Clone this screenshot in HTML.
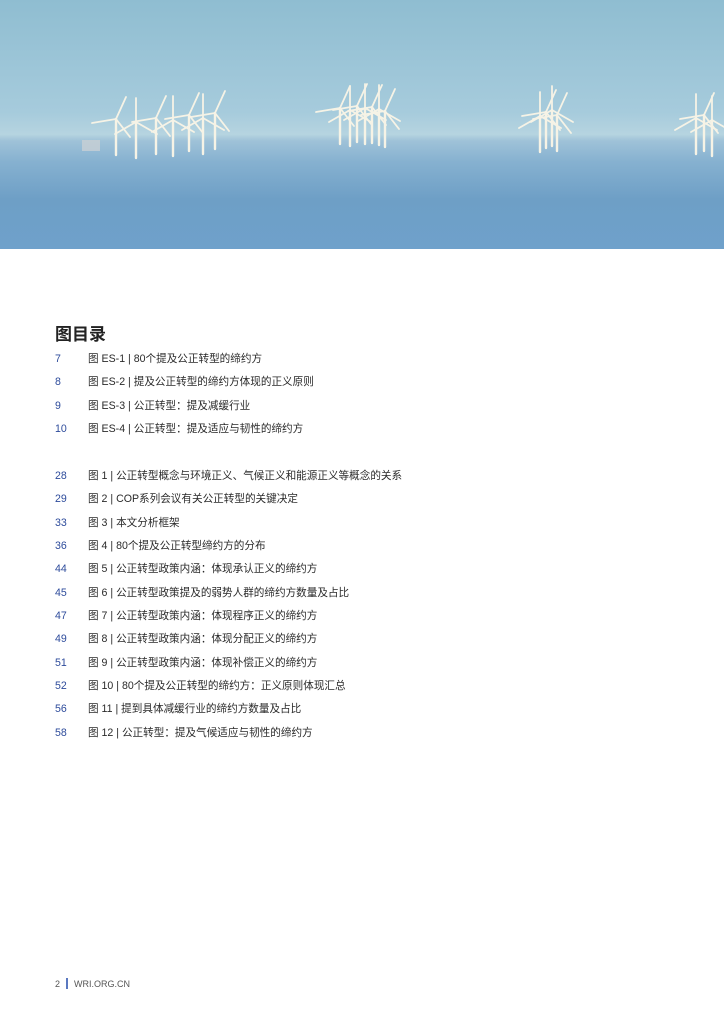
<!DOCTYPE html>
<html><head><meta charset="utf-8"><style>
body{margin:0;width:724px;height:1024px;background:#fff;position:relative;overflow:hidden;font-family:"Liberation Sans","Noto Sans CJK SC",sans-serif;}
.ph{position:absolute;left:0;top:0;width:724px;height:249px;}
h1{position:absolute;left:55px;top:320px;margin:0;font-size:17px;font-weight:bold;color:#222;font-family:"Noto Sans CJK SC",sans-serif;}
.r{position:absolute;left:0;font-size:10.6px;color:#2a2a2a;white-space:nowrap;line-height:14px}
.r b{position:absolute;left:55px;font-weight:normal;color:#2d4b9b;}
.r span{position:absolute;left:88px;}
.ft{position:absolute;left:55px;top:978px;font-size:9px;color:#555;}
.ft i{display:inline-block;width:2px;height:11px;background:#5a78c0;vertical-align:-2px;margin:0 6px;}
</style></head><body>
<svg class="ph" width="724" height="249" viewBox="0 0 724 249">
<defs>
<linearGradient id="g" x1="0" y1="0" x2="0" y2="1">
<stop offset="0" stop-color="#8fbdd1"/>
<stop offset="0.45" stop-color="#a6cbdc"/>
<stop offset="0.54" stop-color="#b6d4e0"/>
<stop offset="0.565" stop-color="#9fc2d8"/>
<stop offset="0.65" stop-color="#86b1d0"/>
<stop offset="0.8" stop-color="#6e9fc6"/>
<stop offset="1" stop-color="#6fa1cb"/>
</linearGradient>
<g id="t" stroke="#f6f3e6" stroke-linecap="round">
<line x1="0" y1="0" x2="0" y2="36" stroke-width="2.4"/>
<line x1="0" y1="0" x2="0" y2="-24" stroke-width="1.8"/>
<line x1="0" y1="0" x2="21" y2="12" stroke-width="1.8"/>
<line x1="0" y1="0" x2="-21" y2="12" stroke-width="1.8"/>
</g>
<g id="u" stroke="#f6f3e6" stroke-linecap="round">
<line x1="0" y1="0" x2="0" y2="36" stroke-width="2.4"/>
<line x1="0" y1="0" x2="10" y2="-22" stroke-width="1.8"/>
<line x1="0" y1="0" x2="14" y2="18" stroke-width="1.8"/>
<line x1="0" y1="0" x2="-24" y2="4" stroke-width="1.8"/>
</g>
</defs>
<rect width="724" height="249" fill="url(#g)"/>
<rect x="82" y="140" width="18" height="11" fill="#c8d0d4" opacity=".8"/>
<use href="#u" x="116" y="119"/>
<use href="#t" x="136" y="122"/>
<use href="#u" x="156" y="118"/>
<use href="#t" x="173" y="120"/>
<use href="#u" x="189" y="115"/>
<use href="#t" x="203" y="118"/>
<use href="#u" x="215" y="113"/>
<use href="#u" x="340" y="108"/>
<use href="#t" x="350" y="110"/>
<use href="#u" x="357" y="106"/>
<use href="#t" x="365" y="108"/>
<use href="#u" x="372" y="107"/>
<use href="#t" x="379" y="109"/>
<use href="#u" x="385" y="111"/>
<use href="#t" x="540" y="116"/>
<use href="#u" x="546" y="112"/>
<use href="#t" x="552" y="110"/>
<use href="#u" x="557" y="115"/>
<use href="#t" x="696" y="118"/>
<use href="#u" x="704" y="115"/>
<use href="#t" x="712" y="120"/>
</svg>
<h1>图目录</h1>
<div class="r" style="top:352px"><b>7</b><span>图 ES-1 | 80个提及公正转型的缔约方</span></div>
<div class="r" style="top:375px"><b>8</b><span>图 ES-2 | 提及公正转型的缔约方体现的正义原则</span></div>
<div class="r" style="top:399px"><b>9</b><span>图 ES-3 | 公正转型：提及减缓行业</span></div>
<div class="r" style="top:422px"><b>10</b><span>图 ES-4 | 公正转型：提及适应与韧性的缔约方</span></div>
<div class="r" style="top:469px"><b>28</b><span>图 1 | 公正转型概念与环境正义、气候正义和能源正义等概念的关系</span></div>
<div class="r" style="top:492px"><b>29</b><span>图 2 | COP系列会议有关公正转型的关键决定</span></div>
<div class="r" style="top:516px"><b>33</b><span>图 3 | 本文分析框架</span></div>
<div class="r" style="top:539px"><b>36</b><span>图 4 | 80个提及公正转型缔约方的分布</span></div>
<div class="r" style="top:562px"><b>44</b><span>图 5 | 公正转型政策内涵：体现承认正义的缔约方</span></div>
<div class="r" style="top:586px"><b>45</b><span>图 6 | 公正转型政策提及的弱势人群的缔约方数量及占比</span></div>
<div class="r" style="top:609px"><b>47</b><span>图 7 | 公正转型政策内涵：体现程序正义的缔约方</span></div>
<div class="r" style="top:632px"><b>49</b><span>图 8 | 公正转型政策内涵：体现分配正义的缔约方</span></div>
<div class="r" style="top:656px"><b>51</b><span>图 9 | 公正转型政策内涵：体现补偿正义的缔约方</span></div>
<div class="r" style="top:679px"><b>52</b><span>图 10 | 80个提及公正转型的缔约方：正义原则体现汇总</span></div>
<div class="r" style="top:702px"><b>56</b><span>图 11 | 提到具体减缓行业的缔约方数量及占比</span></div>
<div class="r" style="top:726px"><b>58</b><span>图 12 | 公正转型：提及气候适应与韧性的缔约方</span></div>
<div class="ft">2<i></i>WRI.ORG.CN</div>
</body></html>
